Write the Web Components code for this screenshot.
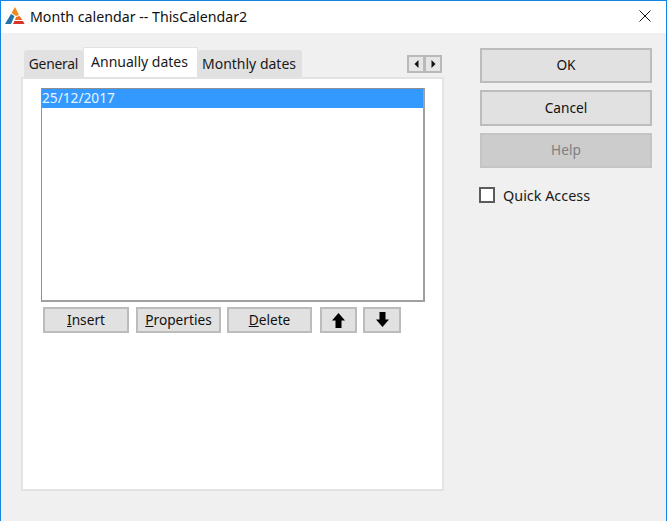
<!DOCTYPE html>
<html>
<head>
<meta charset="utf-8">
<title>Month calendar</title>
<style>
    html, body { margin: 0; height: 100%; overflow: hidden; background: #f0f0f0; }
    body { font-family: "Noto Sans", "Open Sans", sans-serif; font-size: 13.7px; color: #1a1a1a; }
</style>
</head>
<body>
<calendar-dialog>
    <span slot="title">Month calendar -- ThisCalendar2</span>
    <tab-panel>
        <date-list></date-list>
    </tab-panel>
    <dialog-button slot="side" style="--h:35px">OK</dialog-button>
    <dialog-button slot="side" style="--h:36px">Cancel</dialog-button>
    <dialog-button slot="side" style="--h:35px" disabled>Help</dialog-button>
    <check-box slot="side">Quick Access</check-box>
</calendar-dialog>

<script>
// window frame: title bar, then the tab panel and the button column
class CalendarDialog extends HTMLElement {
    constructor() {
        super();
        this.attachShadow({ mode: 'open' }).innerHTML = `
            <style>
                :host { display: flex; flex-direction: column; height: 521px; box-sizing: border-box;
                        border: 1px solid #0f85e6; border-bottom: 0; background: #f0f0f0; }
                .title { display: flex; align-items: center; box-sizing: border-box; height: 32px; background: #fff;
                         padding: 0 0 2px 4px; }
                .title svg { display: block; flex: none; }
                .text { margin-left: 5px; font-size: 14.2px; color: #111; flex: 1; }
                .close { width: 12px; height: 12px; margin-right: 15px; }
                .body { display: flex; padding: 14px 13px 0 20px; }
                .main { flex: none; width: 423px; }
                .side { flex: none; width: 172px; margin-left: 36px; margin-top: 1px;
                        display: flex; flex-direction: column; gap: 7px; }
            </style>
            <div class="title">
                <svg width="20" height="18" viewBox="0 0 20 18">
                    <path d="M10 0 L14 8 L11 9 L6.5 6 Z" fill="#f08a1d"/>
                    <path d="M6 7 L9.5 9 L6 17 L0 17 Z" fill="#2173a8"/>
                    <path d="M11 10 L14.5 9 L17.5 13 L10 13 Z" fill="#f26a21"/>
                    <path d="M9.5 14 L18 14 L19.5 17 L8 17 Z" fill="#d8352a"/>
                </svg>
                <span class="text"><slot name="title"></slot></span>
                <svg class="close" viewBox="0 0 12 12"><path d="M0.5 0.5 L11.5 11.5 M11.5 0.5 L0.5 11.5" stroke="#111" stroke-width="1" fill="none"/></svg>
            </div>
            <div class="body">
                <div class="main"><slot></slot></div>
                <div class="side"><slot name="side"></slot></div>
            </div>
        `;
    }
}

class TabPanel extends HTMLElement {
    constructor() {
        super();
        this.attachShadow({ mode: 'open' }).innerHTML = `
            <style>
                :host { display: block; }
                .strip { display: flex; align-items: flex-end; height: 30px; padding-left: 3px; }
                .tab { box-sizing: border-box; height: 27px; background: #e1e1e1; display: flex; align-items: center;
                       justify-content: center; border-radius: 3px 3px 0 0; font-size: 14px; padding-right: 2px; }
                .tab.first { font-size: 13.8px; letter-spacing: -0.2px; padding-right: 0; }
                .tab.on { height: 30px; background: #fff; border: 1px solid #e2e2e2; border-bottom: 0;
                          padding-bottom: 3px; border-radius: 0; }
                .scroll { display: flex; margin-left: auto; margin-right: 2px; align-self: flex-start; margin-top: 8px; }
                .scroll div { box-sizing: border-box; width: 18px; height: 18px; background: #e6e6e6;
                              border: 2px solid #b9b9b9; display: flex; align-items: center; justify-content: center; }
                .scroll div + div { margin-left: -1px; }
                .page { box-sizing: border-box; height: 414px; background: #fff; border: 2px solid #e3e3e3; padding: 9px 17px 0 18px; }
            </style>
            <div class="strip">
                <div class="tab first" style="width:59px">General</div>
                <div class="tab on" style="width:115px">Annually dates</div>
                <div class="tab" style="width:104px">Monthly dates</div>
                <div class="scroll">
                    <div><svg width="5" height="8" viewBox="0 0 5 8"><path d="M4.5 0 V8 L0.5 4 Z" fill="#111"/></svg></div>
                    <div><svg width="5" height="8" viewBox="0 0 5 8"><path d="M0.5 0 V8 L4.5 4 Z" fill="#111"/></svg></div>
                </div>
            </div>
            <div class="page"><slot></slot></div>
        `;
    }
}

class DateList extends HTMLElement {
    constructor() {
        super();
        this.attachShadow({ mode: 'open' }).innerHTML = `
            <style>
                :host { display: block; }
                .list { box-sizing: border-box; height: 214px; background: #fff; border: 1px solid #8f8f8f; border-width: 1px 2px 2px 1px; border-right-color: #a0a0a0; border-bottom-color: #a0a0a0; }
                .row { height: 19px; line-height: 18px; background: #3399ff; color: #e8f3ff; }
                .bar { display: flex; margin-top: 5px; padding-left: 2px; }
                .up { margin-top: 3px; display: block; }
                .down { display: block; }
            </style>
            <div class="list"><div class="row">25/12/2017</div></div>
            <div class="bar">
                <dialog-button style="--w:86px;--h:26px"><u>I</u>nsert</dialog-button>
                <dialog-button style="--w:85px;--h:26px;margin-left:7px"><u>P</u>roperties</dialog-button>
                <dialog-button style="--w:85px;--h:26px;margin-left:6px"><u>D</u>elete</dialog-button>
                <dialog-button style="--w:37px;--h:26px;margin-left:8px">
                    <svg class="up" width="13" height="15" viewBox="0 0 13 15"><path d="M6.5 0 L13 7.5 H9.5 V15 H3.5 V7.5 H0 Z" fill="#000"/></svg>
                </dialog-button>
                <dialog-button style="--w:38px;--h:26px;margin-left:6px">
                    <svg class="down" width="13" height="15" viewBox="0 0 13 15"><path d="M6.5 15 L13 7.5 H9.5 V0 H3.5 V7.5 H0 Z" fill="#000"/></svg>
                </dialog-button>
            </div>
        `;
    }
}

class DialogButton extends HTMLElement {
    constructor() {
        super();
        this.attachShadow({ mode: 'open' }).innerHTML = `
            <style>
                :host { display: flex; flex: none; box-sizing: border-box; width: var(--w, auto); height: var(--h, 35px);
                        padding-bottom: 2px; align-items: center; justify-content: center; background: #e1e1e1;
                        border: 2px solid #bcbcbc; color: #111; }
                :host([disabled]) { background: #cccccc; border-color: #c4c4c4; color: #808080; }
            </style>
            <slot></slot>
        `;
    }
}

class CheckBox extends HTMLElement {
    constructor() {
        super();
        this.attachShadow({ mode: 'open' }).innerHTML = `
            <style>
                :host { display: flex; align-items: center; margin-top: 12px; margin-left: -1px; font-size: 14.4px; height: 16px; }
                .box { box-sizing: border-box; width: 16px; height: 16px; background: #fff; border: 2px solid #5c5c5c; }
                .label { margin-left: 8px; }
            </style>
            <div class="box"></div>
            <span class="label"><slot></slot></span>
        `;
    }
}

customElements.define('calendar-dialog', CalendarDialog);
customElements.define('tab-panel', TabPanel);
customElements.define('date-list', DateList);
customElements.define('dialog-button', DialogButton);
customElements.define('check-box', CheckBox);
</script>
</body>
</html>
